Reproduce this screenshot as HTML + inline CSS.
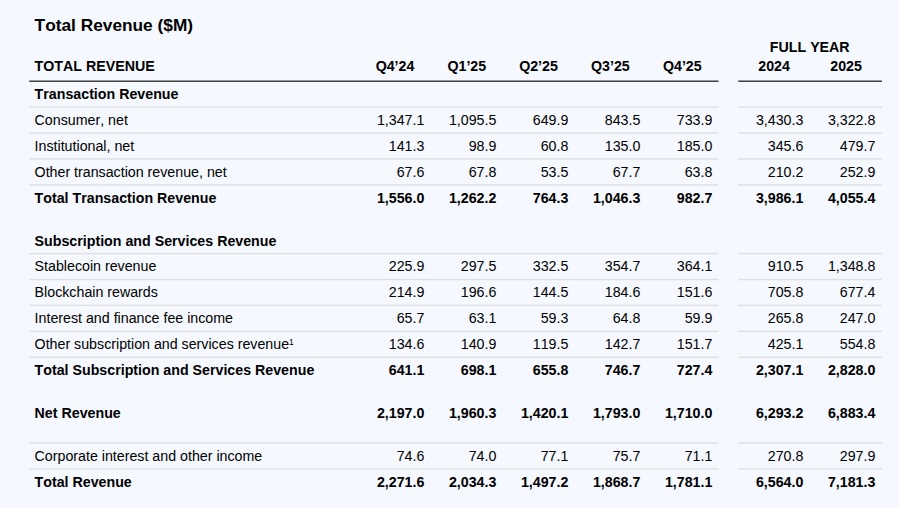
<!DOCTYPE html>
<html><head><meta charset="utf-8"><title>Total Revenue</title>
<style>
html,body{margin:0;padding:0;}
body{width:899px;height:508px;background:#f5f8fe;overflow:hidden;position:relative;font-family:"Liberation Sans",sans-serif;color:#000;}
.t{position:absolute;white-space:nowrap;font-size:14.22px;font-kerning:none;line-height:26px;height:26px;}
.b{font-weight:bold;}
.r{text-align:right;width:80px;}
.c{text-align:center;width:80px;}
.ln{position:absolute;height:1.45px;background:#e0e0e2;}
.hl{position:absolute;height:1.5px;background:#404040;}
sup{font-size:8.5px;line-height:0;vertical-align:baseline;position:relative;top:-4px;}
h1{position:absolute;margin:0;left:34.6px;top:14.40px;font-size:17.3px;line-height:22px;font-weight:bold;font-kerning:none;white-space:nowrap;}
</style></head><body>
<h1>Total Revenue ($M)</h1>
<div class="t b" style="left:34.6px;top:53px">TOTAL REVENUE</div>
<div class="t b c" style="left:709.75px;width:200px;top:34px">FULL YEAR</div>

<div class="t b c" style="left:355.0px;top:53px">Q4’24</div>
<div class="t b c" style="left:426.8px;top:53px">Q1’25</div>
<div class="t b c" style="left:498.5px;top:53px">Q2’25</div>
<div class="t b c" style="left:570.4px;top:53px">Q3’25</div>
<div class="t b c" style="left:642.3px;top:53px">Q4’25</div>
<div class="t b c" style="left:734.1px;top:53px">2024</div>
<div class="t b c" style="left:806.1px;top:53px">2025</div>
<div class="t b" style="left:34.6px;top:81.00px">Transaction Revenue</div>
<div class="t" style="left:34.6px;top:107.00px">Consumer, net</div>
<div class="t r" style="left:344.4px;top:107.00px">1,347.1</div>
<div class="t r" style="left:416.4px;top:107.00px">1,095.5</div>
<div class="t r" style="left:488.4px;top:107.00px">649.9</div>
<div class="t r" style="left:560.4px;top:107.00px">843.5</div>
<div class="t r" style="left:632.4px;top:107.00px">733.9</div>
<div class="t r" style="left:723.4px;top:107.00px">3,430.3</div>
<div class="t r" style="left:795.4px;top:107.00px">3,322.8</div>
<div class="t" style="left:34.6px;top:133.00px">Institutional, net</div>
<div class="t r" style="left:344.4px;top:133.00px">141.3</div>
<div class="t r" style="left:416.4px;top:133.00px">98.9</div>
<div class="t r" style="left:488.4px;top:133.00px">60.8</div>
<div class="t r" style="left:560.4px;top:133.00px">135.0</div>
<div class="t r" style="left:632.4px;top:133.00px">185.0</div>
<div class="t r" style="left:723.4px;top:133.00px">345.6</div>
<div class="t r" style="left:795.4px;top:133.00px">479.7</div>
<div class="t" style="left:34.6px;top:159.00px">Other transaction revenue, net</div>
<div class="t r" style="left:344.4px;top:159.00px">67.6</div>
<div class="t r" style="left:416.4px;top:159.00px">67.8</div>
<div class="t r" style="left:488.4px;top:159.00px">53.5</div>
<div class="t r" style="left:560.4px;top:159.00px">67.7</div>
<div class="t r" style="left:632.4px;top:159.00px">63.8</div>
<div class="t r" style="left:723.4px;top:159.00px">210.2</div>
<div class="t r" style="left:795.4px;top:159.00px">252.9</div>
<div class="t b" style="left:34.6px;top:185.00px">Total Transaction Revenue</div>
<div class="t b r" style="left:344.4px;top:185.00px">1,556.0</div>
<div class="t b r" style="left:416.4px;top:185.00px">1,262.2</div>
<div class="t b r" style="left:488.4px;top:185.00px">764.3</div>
<div class="t b r" style="left:560.4px;top:185.00px">1,046.3</div>
<div class="t b r" style="left:632.4px;top:185.00px">982.7</div>
<div class="t b r" style="left:723.4px;top:185.00px">3,986.1</div>
<div class="t b r" style="left:795.4px;top:185.00px">4,055.4</div>
<div class="t b" style="left:34.6px;top:228.00px">Subscription and Services Revenue</div>
<div class="t" style="left:34.6px;top:253.00px">Stablecoin revenue</div>
<div class="t r" style="left:344.4px;top:253.00px">225.9</div>
<div class="t r" style="left:416.4px;top:253.00px">297.5</div>
<div class="t r" style="left:488.4px;top:253.00px">332.5</div>
<div class="t r" style="left:560.4px;top:253.00px">354.7</div>
<div class="t r" style="left:632.4px;top:253.00px">364.1</div>
<div class="t r" style="left:723.4px;top:253.00px">910.5</div>
<div class="t r" style="left:795.4px;top:253.00px">1,348.8</div>
<div class="t" style="left:34.6px;top:279.00px">Blockchain rewards</div>
<div class="t r" style="left:344.4px;top:279.00px">214.9</div>
<div class="t r" style="left:416.4px;top:279.00px">196.6</div>
<div class="t r" style="left:488.4px;top:279.00px">144.5</div>
<div class="t r" style="left:560.4px;top:279.00px">184.6</div>
<div class="t r" style="left:632.4px;top:279.00px">151.6</div>
<div class="t r" style="left:723.4px;top:279.00px">705.8</div>
<div class="t r" style="left:795.4px;top:279.00px">677.4</div>
<div class="t" style="left:34.6px;top:305.00px">Interest and finance fee income</div>
<div class="t r" style="left:344.4px;top:305.00px">65.7</div>
<div class="t r" style="left:416.4px;top:305.00px">63.1</div>
<div class="t r" style="left:488.4px;top:305.00px">59.3</div>
<div class="t r" style="left:560.4px;top:305.00px">64.8</div>
<div class="t r" style="left:632.4px;top:305.00px">59.9</div>
<div class="t r" style="left:723.4px;top:305.00px">265.8</div>
<div class="t r" style="left:795.4px;top:305.00px">247.0</div>
<div class="t" style="left:34.6px;top:331.00px">Other subscription and services revenue<sup>1</sup></div>
<div class="t r" style="left:344.4px;top:331.00px">134.6</div>
<div class="t r" style="left:416.4px;top:331.00px">140.9</div>
<div class="t r" style="left:488.4px;top:331.00px">119.5</div>
<div class="t r" style="left:560.4px;top:331.00px">142.7</div>
<div class="t r" style="left:632.4px;top:331.00px">151.7</div>
<div class="t r" style="left:723.4px;top:331.00px">425.1</div>
<div class="t r" style="left:795.4px;top:331.00px">554.8</div>
<div class="t b" style="left:34.6px;top:357.00px">Total Subscription and Services Revenue</div>
<div class="t b r" style="left:344.4px;top:357.00px">641.1</div>
<div class="t b r" style="left:416.4px;top:357.00px">698.1</div>
<div class="t b r" style="left:488.4px;top:357.00px">655.8</div>
<div class="t b r" style="left:560.4px;top:357.00px">746.7</div>
<div class="t b r" style="left:632.4px;top:357.00px">727.4</div>
<div class="t b r" style="left:723.4px;top:357.00px">2,307.1</div>
<div class="t b r" style="left:795.4px;top:357.00px">2,828.0</div>
<div class="t b" style="left:34.6px;top:400.00px">Net Revenue</div>
<div class="t b r" style="left:344.4px;top:400.00px">2,197.0</div>
<div class="t b r" style="left:416.4px;top:400.00px">1,960.3</div>
<div class="t b r" style="left:488.4px;top:400.00px">1,420.1</div>
<div class="t b r" style="left:560.4px;top:400.00px">1,793.0</div>
<div class="t b r" style="left:632.4px;top:400.00px">1,710.0</div>
<div class="t b r" style="left:723.4px;top:400.00px">6,293.2</div>
<div class="t b r" style="left:795.4px;top:400.00px">6,883.4</div>
<div class="t" style="left:34.6px;top:443.00px">Corporate interest and other income</div>
<div class="t r" style="left:344.4px;top:443.00px">74.6</div>
<div class="t r" style="left:416.4px;top:443.00px">74.0</div>
<div class="t r" style="left:488.4px;top:443.00px">77.1</div>
<div class="t r" style="left:560.4px;top:443.00px">75.7</div>
<div class="t r" style="left:632.4px;top:443.00px">71.1</div>
<div class="t r" style="left:723.4px;top:443.00px">270.8</div>
<div class="t r" style="left:795.4px;top:443.00px">297.9</div>
<div class="t b" style="left:34.6px;top:469.00px">Total Revenue</div>
<div class="t b r" style="left:344.4px;top:469.00px">2,271.6</div>
<div class="t b r" style="left:416.4px;top:469.00px">2,034.3</div>
<div class="t b r" style="left:488.4px;top:469.00px">1,497.2</div>
<div class="t b r" style="left:560.4px;top:469.00px">1,868.7</div>
<div class="t b r" style="left:632.4px;top:469.00px">1,781.1</div>
<div class="t b r" style="left:723.4px;top:469.00px">6,564.0</div>
<div class="t b r" style="left:795.4px;top:469.00px">7,181.3</div>
<svg width="899" height="508" viewBox="0 0 899 508" style="position:absolute;left:0;top:0"><rect x="29.2" y="80.47" width="689.3" height="1.5" fill="#404040"/><rect x="738.2" y="80.47" width="143.8" height="1.5" fill="#404040"/><rect x="29.2" y="106.45" width="689.3" height="1.45" fill="#e0e0e2"/><rect x="738.2" y="106.45" width="143.8" height="1.45" fill="#e0e0e2"/><rect x="29.2" y="132.35" width="689.3" height="1.45" fill="#e0e0e2"/><rect x="738.2" y="132.35" width="143.8" height="1.45" fill="#e0e0e2"/><rect x="29.2" y="158.25" width="689.3" height="1.45" fill="#e0e0e2"/><rect x="738.2" y="158.25" width="143.8" height="1.45" fill="#e0e0e2"/><rect x="29.2" y="184.15" width="689.3" height="1.45" fill="#e0e0e2"/><rect x="738.2" y="184.15" width="143.8" height="1.45" fill="#e0e0e2"/><rect x="29.2" y="252.85" width="689.3" height="1.45" fill="#e0e0e2"/><rect x="738.2" y="252.85" width="143.8" height="1.45" fill="#e0e0e2"/><rect x="29.2" y="278.78" width="689.3" height="1.45" fill="#e0e0e2"/><rect x="738.2" y="278.78" width="143.8" height="1.45" fill="#e0e0e2"/><rect x="29.2" y="304.71" width="689.3" height="1.45" fill="#e0e0e2"/><rect x="738.2" y="304.71" width="143.8" height="1.45" fill="#e0e0e2"/><rect x="29.2" y="330.64" width="689.3" height="1.45" fill="#e0e0e2"/><rect x="738.2" y="330.64" width="143.8" height="1.45" fill="#e0e0e2"/><rect x="29.2" y="356.57" width="689.3" height="1.45" fill="#e0e0e2"/><rect x="738.2" y="356.57" width="143.8" height="1.45" fill="#e0e0e2"/><rect x="29.2" y="442.15" width="689.3" height="1.45" fill="#e0e0e2"/><rect x="738.2" y="442.15" width="143.8" height="1.45" fill="#e0e0e2"/><rect x="29.2" y="468.10" width="689.3" height="1.45" fill="#e0e0e2"/><rect x="738.2" y="468.10" width="143.8" height="1.45" fill="#e0e0e2"/></svg>
</body></html>
